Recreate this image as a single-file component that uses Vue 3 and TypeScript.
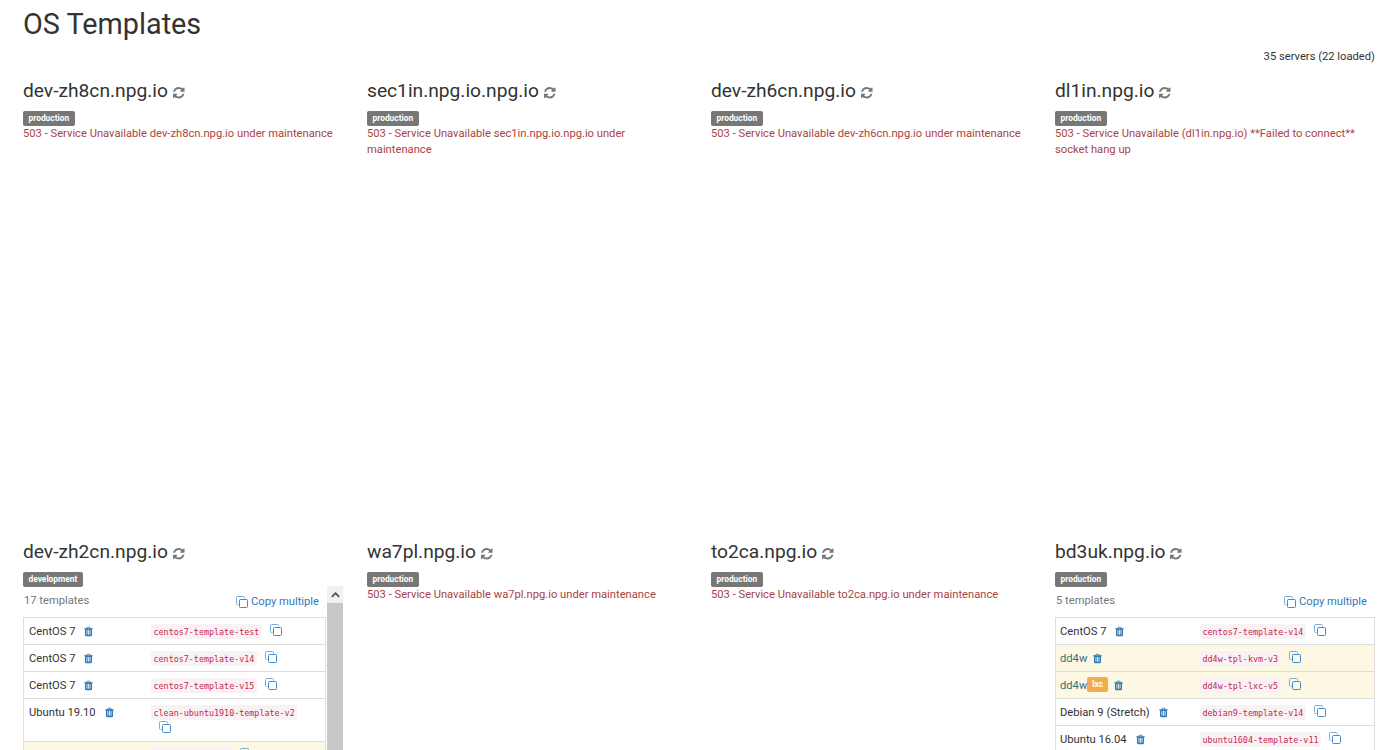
<script setup lang="ts">
// une ligne de template dans le tableau d'un serveur
interface Template {
  name: string
  code: string
  badge?: string
  warn?: boolean
}

interface Server {
  host: string
  env: string
  error?: string[]
  count?: number
  wide?: boolean
  scroll?: boolean
  templates?: Template[]
}

const servers: Server[] = [
  { host: 'dev-zh8cn.npg.io', env: 'production', error: ['503 - Service Unavailable dev-zh8cn.npg.io under maintenance'] },
  { host: 'sec1in.npg.io.npg.io', env: 'production', error: ['503 - Service Unavailable sec1in.npg.io.npg.io under maintenance'] },
  { host: 'dev-zh6cn.npg.io', env: 'production', error: ['503 - Service Unavailable dev-zh6cn.npg.io under maintenance'] },
  { host: 'dl1in.npg.io', env: 'production', error: ['503 - Service Unavailable (dl1in.npg.io) **Failed to connect**', 'socket hang up'] },
  {
    host: 'dev-zh2cn.npg.io',
    env: 'development',
    count: 17,
    scroll: true,
    templates: [
      { name: 'CentOS 7', code: 'centos7-template-test' },
      { name: 'CentOS 7', code: 'centos7-template-v14' },
      { name: 'CentOS 7', code: 'centos7-template-v15' },
      { name: 'Ubuntu 19.10', code: 'clean-ubuntu1910-template-v2' },
      { name: 'dd4w', code: 'dd4w-tpl-kvm-v3', warn: true },
      { name: 'dd4w', code: 'dd4w-tpl-lxc-v5', warn: true },
    ],
  },
  { host: 'wa7pl.npg.io', env: 'production', error: ['503 - Service Unavailable wa7pl.npg.io under maintenance'] },
  { host: 'to2ca.npg.io', env: 'production', error: ['503 - Service Unavailable to2ca.npg.io under maintenance'] },
  {
    host: 'bd3uk.npg.io',
    env: 'production',
    count: 5,
    wide: true,
    templates: [
      { name: 'CentOS 7', code: 'centos7-template-v14' },
      { name: 'dd4w', code: 'dd4w-tpl-kvm-v3', warn: true },
      { name: 'dd4w', code: 'dd4w-tpl-lxc-v5', badge: 'lxc', warn: true },
      { name: 'Debian 9 (Stretch)', code: 'debian9-template-v14' },
      { name: 'Ubuntu 16.04', code: 'ubuntu1604-template-v11' },
    ],
  },
]
</script>

<template>
  <div class="page">
    <h1>OS Templates</h1>
    <p class="summary">35 servers (22 loaded)</p>

    <div class="grid">
      <section v-for="server in servers" :key="server.host" class="server">
        <h3>
          {{ server.host }}
          <svg class="refresh" viewBox="0 0 1792 1792">
            <path d="M1639 1056q0 5-1 7-64 268-268 434.5t-478 166.5q-146 0-282.5-55t-243.5-157l-129 129q-19 19-45 19t-45-19-19-45v-448q0-26 19-45t45-19h448q26 0 45 19t19 45-19 45l-137 137q71 66 161 102t187 36q134 0 250-65t186-179q11-17 53-117 8-23 30-23h192q13 0 22.5 9.5t9.5 22.5zm25-800v448q0 26-19 45t-45 19h-448q-26 0-45-19t-19-45 19-45l138-138q-148-137-349-137-134 0-250 65t-186 179q-11 17-53 117-8 23-30 23h-199q-13 0-22.5-9.5t-9.5-22.5v-7q65-268 270-434.5t480-166.5q146 0 284 55.5t245 156.5l130-129q19-19 45-19t45 19 19 45z" />
          </svg>
        </h3>
        <span class="label">{{ server.env }}</span>

        <p v-if="server.error" class="error">
          <template v-for="(line, i) in server.error" :key="i">
            <br v-if="i > 0" />{{ line }}
          </template>
        </p>

        <div v-else class="list" :class="{ scroll: server.scroll }">
          <div class="list-body">
            <div class="list-head">
              <span class="count">{{ server.count }} templates</span>
              <a class="copy-multi">
                <svg class="copy" viewBox="0 0 12 12">
                  <path class="back" d="M2.5 8.5h-1a1 1 0 0 1-1-1v-6a1 1 0 0 1 1-1h6a1 1 0 0 1 1 1v1" />
                  <rect x="3.5" y="3.5" width="8" height="8" rx="1" />
                </svg>
                Copy multiple
              </a>
            </div>
            <table :class="{ wide: server.wide }">
              <tbody>
                <tr v-for="(t, i) in server.templates" :key="i" :class="{ warn: t.warn }">
                  <td class="name">
                    {{ t.name }}<span v-if="t.badge" class="badge">{{ t.badge }}</span>
                    <svg class="trash" viewBox="0 0 1792 1792">
                      <path d="M704 1376v-704q0-14-9-23t-23-9h-64q-14 0-23 9t-9 23v704q0 14 9 23t23 9h64q14 0 23-9t9-23zm256 0v-704q0-14-9-23t-23-9h-64q-14 0-23 9t-9 23v704q0 14 9 23t23 9h64q14 0 23-9t9-23zm256 0v-704q0-14-9-23t-23-9h-64q-14 0-23 9t-9 23v704q0 14 9 23t23 9h64q14 0 23-9t9-23zm-544-992h448l-48-117q-7-9-17-11h-317q-10 2-17 11zm928 32v64q0 14-9 23t-23 9h-96v948q0 83-47 143.5t-113 60.5h-832q-66 0-113-58.5t-47-141.5v-952h-96q-14 0-23-9t-9-23v-64q0-14 9-23t23-9h309l70-167q15-37 54-63t79-26h320q40 0 79 26t54 63l70 167h309q14 0 23 9t9 23z" />
                    </svg>
                  </td>
                  <td class="tpl">
                    <code>{{ t.code }}</code>
                    <svg class="copy" viewBox="0 0 12 12">
                      <path class="back" d="M2.5 8.5h-1a1 1 0 0 1-1-1v-6a1 1 0 0 1 1-1h6a1 1 0 0 1 1 1v1" />
                      <rect x="3.5" y="3.5" width="8" height="8" rx="1" />
                    </svg>
                  </td>
                </tr>
              </tbody>
            </table>
          </div>
          <!-- barre de défilement de la liste -->
          <div v-if="server.scroll" class="scrollbar">
            <span class="scroll-up">
              <svg viewBox="0 0 10 6"><path d="M1 5l4-4 4 4" /></svg>
            </span>
          </div>
        </div>
      </section>
    </div>
  </div>
</template>

<style>
html,
body {
  margin: 0;
  height: 750px;
  overflow: hidden;
  background: #fff;
}
</style>

<style scoped>
.page {
  padding: 0 9px 0 23px;
  font-family: Roboto, "Liberation Sans", sans-serif;
  font-size: 11.2px;
  line-height: 16px;
  color: #333;
}

h1 {
  margin: 0;
  padding-top: 8px;
  font-size: 28.8px;
  font-weight: 400;
  line-height: 32px;
}

.summary {
  margin: 9px 0 0;
  text-align: right;
}

.grid {
  display: grid;
  grid-template-columns: repeat(4, 320px);
  column-gap: 24px;
  grid-auto-rows: 461px;
  margin-top: -2px;
}

.server {
  min-width: 0;
}

h3 {
  margin: 0 0 6px;
  padding-top: 14px;
  font-size: 19.2px;
  font-weight: 400;
  line-height: 28px;
}

.refresh {
  width: 13.5px;
  height: 13.5px;
  margin-left: -1px;
  fill: #777;
  vertical-align: -2px;
}

.label {
  display: block;
  width: fit-content;
  padding: 0 5.5px;
  background: #777;
  border-radius: 2px;
  color: #fff;
  font-size: 8.4px;
  font-weight: 700;
  line-height: 15px;
}

.error {
  margin: 0;
  color: #a94442;
}

.list {
  display: flex;
}

.list.scroll {
  height: 380px;
  margin-top: -1px;
}

.list-body {
  flex: 1;
  min-width: 0;
}

.scroll .list-body {
  padding-top: 1px;
}

.scroll table {
  width: calc(100% - 1px);
}

.list-head {
  display: flex;
  justify-content: space-between;
  padding: 6px 8px 8px 1px;
}

.count {
  color: #777;
}

.copy-multi {
  display: flex;
  align-items: center;
  gap: 3px;
  position: relative;
  top: 1px;
  color: #337ab7;
}

table {
  width: 100%;
  border-collapse: collapse;
  table-layout: fixed;
}

td {
  height: 16px;
  padding: 6px 5px 4px;
  border-top: 1px solid #ddd;
  border-bottom: 1px solid #ddd;
  vertical-align: top;
}

td:first-child {
  border-left: 1px solid #ddd;
}

td:last-child {
  border-right: 1px solid #ddd;
}

tr.warn td {
  background: #fcf8e3;
}

tr.warn .name {
  color: #2f7278;
}

.name {
  width: 112px;
}

.wide .name {
  width: 130px;
  padding-left: 4px;
}

.badge {
  display: inline-block;
  margin-top: -1px;
  padding: 0 5px;
  background: #f0ad4e;
  border-radius: 2px;
  color: #fff;
  font-size: 8.4px;
  font-weight: 700;
  line-height: 15px;
  vertical-align: top;
}

.trash {
  width: 11px;
  height: 11px;
  margin-left: 8px;
  fill: #337ab7;
  vertical-align: -2px;
}

tr.warn .trash {
  margin-left: 5px;
}

code {
  padding: 2.5px;
  background: #f9f2f4;
  border-radius: 3px;
  color: #c7254e;
  font-family: "DejaVu Sans Mono", monospace;
  font-size: 8.4px;
  line-height: 8px;
  vertical-align: 1px;
}

.copy {
  width: 12px;
  height: 12px;
  flex: none;
  fill: none;
  stroke: #3d8bd0;
  stroke-width: 1;
}

.copy .back {
  stroke: #7aaad6;
}

.tpl .copy {
  margin: 0 8px;
  vertical-align: -1px;
}

.scrollbar {
  flex: none;
  width: 16px;
  background: #c8c8c8;
}

.scroll-up {
  display: flex;
  align-items: center;
  justify-content: center;
  height: 17px;
  background: #f1f1f1;
}

.scroll-up svg {
  width: 9px;
  height: 6px;
  fill: none;
  stroke: #505050;
  stroke-width: 2;
}
</style>
